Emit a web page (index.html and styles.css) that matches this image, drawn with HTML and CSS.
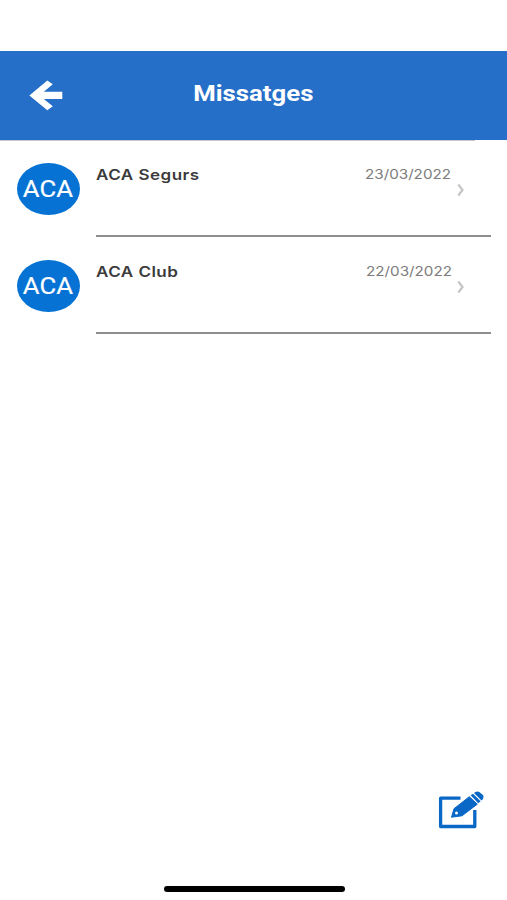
FILE: index.html
```html
<!DOCTYPE html>
<html lang="ca">
<head>
<meta charset="utf-8">
<title>Missatges</title>
<link rel="stylesheet" href="styles.css">
</head>
<body>
<div class="screen">
  <header class="bar">
    <svg class="back" viewBox="0 0 34 32"><path d="M18.300 1.500 23.800 5.300 14.800 12.800H33.300V20H14.800L23.800 27.300 18.300 31.200.4 16.500Z" fill="#fff"/></svg>
    <h1 class="title"><span>Missatges</span></h1>
  </header>
  <div class="hairline"></div>
  <main class="list">
    <article class="row">
      <div class="avatar"><span>ACA</span></div>
      <div class="body">
        <h2 class="name"><span>ACA Segurs</span></h2>
        <time class="date"><span>23/03/2022</span></time>
        <svg class="chevron" viewBox="0 0 8 14"><path d="M1.300 1.500 5.500 7l-4.200 5.500" fill="none" stroke="#c6c6c6" stroke-width="2.300"/></svg>
      </div>
    </article>
    <article class="row">
      <div class="avatar"><span>ACA</span></div>
      <div class="body">
        <h2 class="name"><span>ACA Club</span></h2>
        <time class="date"><span>22/03/2022</span></time>
        <svg class="chevron" viewBox="0 0 8 14"><path d="M1.300 1.500 5.500 7l-4.200 5.500" fill="none" stroke="#c6c6c6" stroke-width="2.300"/></svg>
      </div>
    </article>
  </main>
  <footer class="foot">
    <svg class="compose" viewBox="0 0 48 40">
      <path d="M24.500 8.200H4.600V36.500H38.800V20" fill="none" stroke="#0967c6" stroke-width="3.300" stroke-linejoin="round"/>
      <path d="M15.500 27.200 18 18.700 33.300 6.700 41.300 14.200 26 25.800Z" fill="#0967c6" stroke="#0967c6" stroke-width="1" stroke-linejoin="round"/>
      <path d="M34.600 5.300 37 3.700 44.700 11.300 42.200 13.200Z" fill="#0967c6"/>
      <path d="M38 3 39.500 1.900Q41.500 1 43.300 2L47 5.100Q48 6.700 47 8.900L45.500 10.400Z" fill="#0967c6"/>
      <circle cx="20.500" cy="23" r="1.500" fill="#fff"/>
    </svg>
    <div class="home"></div>
  </footer>
</div>
</body>
</html>
```
FILE: styles.css
```css
* { box-sizing: border-box; }
body { margin: 0; background: #fff; }
h1, h2 { margin: 0; }
.screen {
  width: 507px;
  height: 900px;
  padding-top: 51px;
  display: flex;
  flex-direction: column;
  overflow: hidden;
  font-family: Inter, "Liberation Sans", sans-serif;
}
.bar {
  height: 89px;
  flex: none;
  background: #266fc8;
  display: grid;
  grid-template-columns: 97px 1fr 97px;
}
.back { width: 34px; height: 32px; margin: 28px 0 0 29px; }
.title {
  margin-top: 30px;
  text-align: center;
  font: 700 22px/26px Roboto, sans-serif;
  color: #fff;
}
.title span, .name span, .date span, .avatar span { display: inline-block; white-space: nowrap; }
.title span { transform: scaleX(1.17); }
.hairline { width: 475px; height: 1px; flex: none; background: #c3c8d3; }
.list { padding: 0 16px 0 17px; flex: none; }
.row { display: grid; grid-template-columns: 63px 1fr; column-gap: 16px; height: 97px; }
.avatar {
  width: 63px;
  height: 52px;
  margin-top: 22px;
  border-radius: 50%;
  background: #0572d4;
  color: #fff;
  font: 400 24px/52px Roboto, sans-serif;
  display: flex;
  justify-content: center;
}
.avatar span { transform: translateX(-0.5px) scaleX(1.07); -webkit-text-stroke: 0.2px #fff; }
.body {
  display: grid;
  grid-template-columns: 1fr auto 14px;
  grid-template-rows: 42px 1fr;
  padding: 0 25px 0 0;
  height: 96px;
  background: linear-gradient(#8e8e8e, #8e8e8e) left bottom / 100% 2px no-repeat;
}
.name { padding-top: 23px; font-size: 14.500px; line-height: 21px; font-weight: 600; color: #3b3b3b; }
.name span { transform-origin: left; transform: scaleX(1.175); letter-spacing: 0.4px; }
.date { padding-top: 23px; font-size: 13px; line-height: 20px; color: #7c7c7c; }
.date span { transform-origin: right; transform: translateX(-0.5px) scaleX(1.17); }
.chevron { grid-column: 3; grid-row: 1 / 3; width: 8px; height: 14px; margin: 42px 0 0 5px; }
.foot { margin-top: auto; display: flex; flex-direction: column; flex: none; }
.compose { width: 48px; height: 40px; align-self: flex-end; margin: 0 23px 56px 0; }
.home { width: 181px; height: 6px; margin: 0 auto 8px 163.500px; border-radius: 3px; background: #000; }
```
